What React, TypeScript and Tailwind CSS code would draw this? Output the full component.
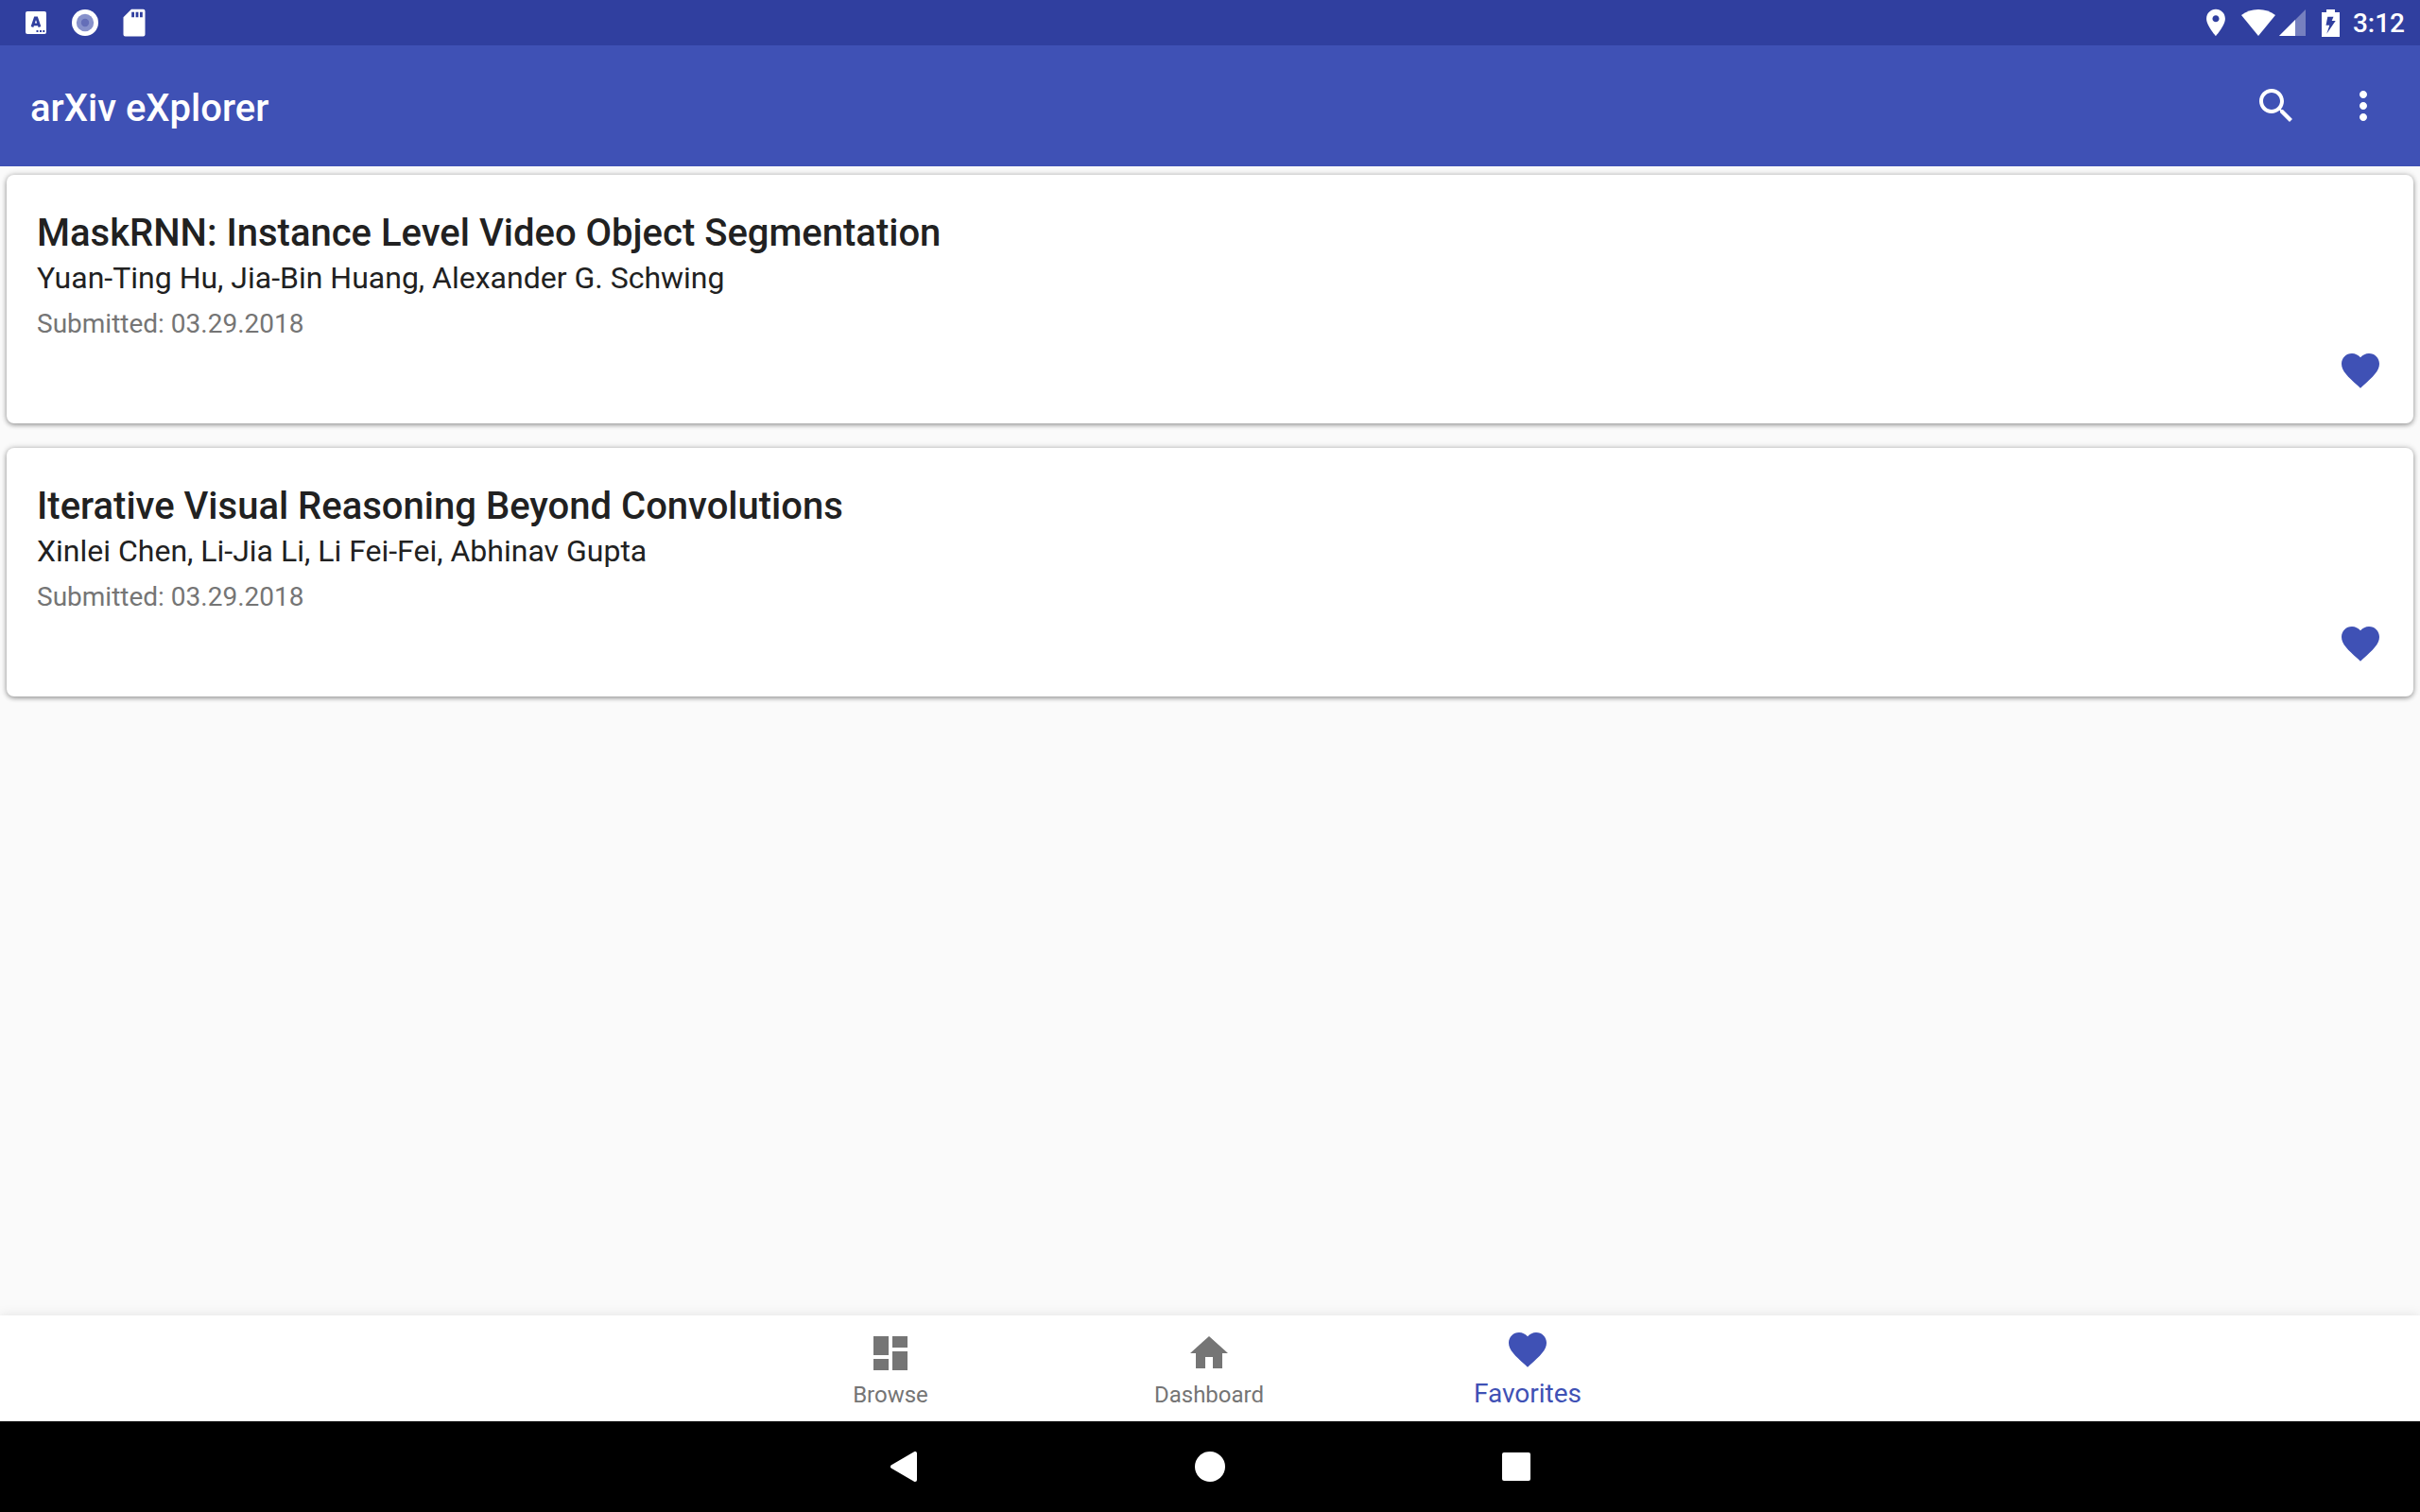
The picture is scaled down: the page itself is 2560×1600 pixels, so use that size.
import type { ReactNode } from "react";

type Paper = { title: string; authors: string; submitted: string };

const papers: Paper[] = [
  {
    title: "MaskRNN: Instance Level Video Object Segmentation",
    authors: "Yuan-Ting Hu, Jia-Bin Huang, Alexander G. Schwing",
    submitted: "03.29.2018",
  },
  {
    title: "Iterative Visual Reasoning Beyond Convolutions",
    authors: "Xinlei Chen, Li-Jia Li, Li Fei-Fei, Abhinav Gupta",
    submitted: "03.29.2018",
  },
];

const HEART =
  "M12 21.35l-1.45-1.32C5.4 15.36 2 12.28 2 8.5 2 5.42 4.42 3 7.5 3c1.74 0 3.41.81 4.5 2.09C13.09 3.81 14.76 3 16.5 3 19.58 3 22 5.42 22 8.5c0 3.78-3.4 6.86-8.55 11.54L12 21.35z";
const SEARCH =
  "M15.5 14h-.79l-.28-.27C15.41 12.59 16 11.11 16 9.5 16 5.91 13.09 3 9.5 3S3 5.91 3 9.5 5.91 16 9.5 16c1.61 0 3.09-.59 4.23-1.57l.27.28v.79l5 4.99L20.49 19l-4.99-5zm-6 0C7.01 14 5 11.99 5 9.5S7.01 5 9.5 5 14 7.01 14 9.5 11.99 14 9.5 14z";
const MORE =
  "M12 8c1.1 0 2-.9 2-2s-.9-2-2-2-2 .9-2 2 .9 2 2 2zm0 2c-1.1 0-2 .9-2 2s.9 2 2 2 2-.9 2-2-.9-2-2-2zm0 6c-1.1 0-2 .9-2 2s.9 2 2 2 2-.9 2-2-.9-2-2-2z";
const BROWSE = "M3 13h8V3H3v10zm0 8h8v-6H3v6zm10 0h8V11h-8v10zm0-18v6h8V3h-8z";
const HOME = "M10 20v-6h4v6h5v-8h3L12 3 2 12h3v8z";

function Icon({ path }: { path: string }) {
  return (
    <svg viewBox="0 0 24 24" className="size-12 fill-current" aria-hidden="true">
      <path d={path} />
    </svg>
  );
}

function StatusBar() {
  return (
    <div className="flex h-12 items-center justify-between bg-[#303f9f] px-4 text-white">
      <div className="flex items-center gap-4">
        <svg viewBox="0 0 44 48" className="h-12 w-11" aria-hidden="true">
          <rect x="11" y="12" width="22" height="24" rx="2" fill="#fff" />
          <path
            d="M18 28.500L21.200 19h1.600L26 28.500M19.200 25.800h5.600"
            fill="none"
            stroke="#303f9f"
            strokeWidth="2.800"
          />
          <path d="M22.500 32h2v2h-2zM26 32h2v2h-2zM29.300 32h2v2h-2z" fill="#303f9f" />
        </svg>
        <svg viewBox="0 0 28 28" className="size-7" aria-hidden="true">
          <circle cx="14" cy="14" r="14" fill="#fff" />
          <circle cx="14" cy="14" r="9.200" fill="#8791cb" />
          <circle cx="14" cy="14" r="4.200" fill="#646eb8" />
        </svg>
        <svg viewBox="0 0 44 48" className="h-12 w-11" aria-hidden="true">
          <path
            fill="#fff"
            fillRule="evenodd"
            d="M19 9.700h12.500a2 2 0 0 1 2 2v24.800a2 2 0 0 1-2 2H12.500a2 2 0 0 1-2-2V18.300zM19.200 12.800v5.400h2.800v-5.400zM23.600 12.800v5.400h2.800v-5.400zM28 12.800v5.400h2.800v-5.400z"
          />
        </svg>
      </div>
      <div className="flex items-center">
        <svg viewBox="0 0 24 24" className="size-[34px] fill-white" aria-hidden="true">
          <path d="M12 2C8.130 2 5 5.130 5 9c0 5.250 7 13 7 13s7-7.750 7-13c0-3.870-3.130-7-7-7zm0 9.500c-1.380 0-2.500-1.120-2.500-2.500s1.120-2.500 2.500-2.500 2.500 1.120 2.500 2.500-1.120 2.500-2.500 2.500z" />
        </svg>
        <svg viewBox="0 0 36 28" className="ml-[10px] h-7 w-9 fill-white" aria-hidden="true">
          <path d="M18 28L36 6C31 2 25 0 18 0S5 2 0 6z" />
        </svg>
        <svg viewBox="0 0 28 28" className="ml-1 size-7" aria-hidden="true">
          <path d="M0 28L28 0v28z" fill="#7680bf" />
          <path d="M0 28L17 11v17z" fill="#fff" />
        </svg>
        <svg viewBox="0 0 19 29" className="ml-[17px] h-[29px] w-[19px]" aria-hidden="true">
          <path
            fill="#fff"
            fillRule="evenodd"
            d="M5 0h9v3h5v26H0V3h5zM6.300 7.700L4.500 16.700h3.800L5.300 25.700L14.700 12h-4L12.500 7.700z"
          />
        </svg>
        <time className="ml-3.5 pt-0.5 text-[28px] leading-10 font-medium">3:12</time>
      </div>
    </div>
  );
}

function PaperCard({ paper }: { paper: Paper }) {
  return (
    <article className="flex flex-col rounded-lg bg-white px-8 pt-9 pb-8 shadow-[0_0_6px_rgba(0,0,0,0.24),0_2px_5px_rgba(0,0,0,0.28)]">
      <h2 className="text-[40px] leading-[52px] font-medium">{paper.title}</h2>
      <p className="text-[32px] leading-[42px]">{paper.authors}</p>
      <p className="mt-2 text-[28px] leading-10 text-[#757575]">Submitted: {paper.submitted}</p>
      <button type="button" aria-label="Remove from favorites" className="mt-[5px] self-end text-[#3f51b5]">
        <Icon path={HEART} />
      </button>
    </article>
  );
}

function Tab({ label, path, active = false }: { label: string; path: string; active?: boolean }) {
  return (
    <button
      type="button"
      aria-current={active ? "page" : undefined}
      className={
        active
          ? "flex w-[337px] flex-col items-center pt-3 text-[28px] leading-[46px] text-[#3f51b5]"
          : "flex w-[337px] flex-col items-center pt-4 text-2xl leading-10 text-[#757575]"
      }
    >
      <Icon path={path} />
      <span>{label}</span>
    </button>
  );
}

function SystemButton({ label, children }: { label: string; children: ReactNode }) {
  return (
    <button type="button" aria-label={label} className="flex w-81 items-center justify-center">
      {children}
    </button>
  );
}

export default function App() {
  return (
    <div className="flex min-h-screen flex-col bg-[#fafafa] font-['Roboto',sans-serif] text-[#212121]">
      <StatusBar />
      <header className="flex h-32 items-center bg-[#3f51b5] pr-9 pl-8 text-white">
        <h1 className="flex-1 pt-1.5 text-[40px] leading-12 font-medium">arXiv eXplorer</h1>
        <div className="flex gap-11">
          <button type="button" aria-label="Search">
            <Icon path={SEARCH} />
          </button>
          <button type="button" aria-label="More options">
            <Icon path={MORE} />
          </button>
        </div>
      </header>
      <main className="flex flex-1 flex-col gap-[26px] px-[7px] pt-[9px]">
        {papers.map((paper) => (
          <PaperCard key={paper.title} paper={paper} />
        ))}
      </main>
      <nav className="flex h-28 items-start justify-center bg-white pr-0.5 shadow-[0_0_12px_rgba(0,0,0,0.1)]">
        <Tab label="Browse" path={BROWSE} />
        <Tab label="Dashboard" path={HOME} />
        <Tab label="Favorites" path={HEART} active />
      </nav>
      <footer className="relative flex h-24 justify-center bg-black">
        <SystemButton label="Back">
          <svg viewBox="0 0 28 32" className="h-8 w-7" aria-hidden="true">
            <path
              d="M2 16L26 2v28z"
              fill="#fff"
              stroke="#fff"
              strokeWidth="4"
              strokeLinejoin="round"
            />
          </svg>
        </SystemButton>
        <SystemButton label="Home">
          <span className="size-8 rounded-full bg-white" />
        </SystemButton>
        <SystemButton label="Recent apps">
          <span className="size-[30px] rounded-xs bg-white" />
        </SystemButton>
      </footer>
    </div>
  );
}
